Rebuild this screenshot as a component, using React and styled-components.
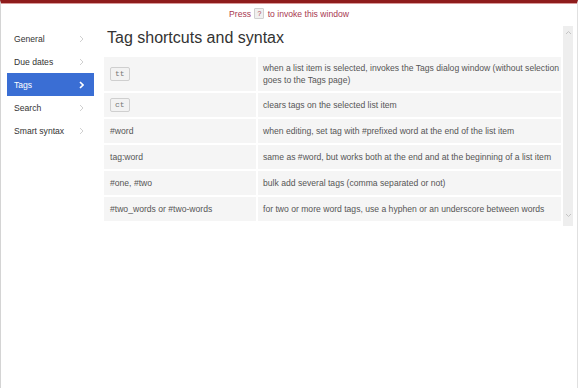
import React from 'react'
import styled, { createGlobalStyle } from 'styled-components'

const GlobalStyle = createGlobalStyle`
    html, body {
        margin: 0;
        padding: 0;
        background: #fff;
    }
    * {
        box-sizing: border-box;
    }
`;

const navItems = ['General', 'Due dates', 'Tags', 'Search', 'Smart syntax'];

const rows = [
    { key: 'tt', desc: 'when a list item is selected, invokes the Tags dialog window (without selection goes to the Tags page)' },
    { key: 'ct', desc: 'clears tags on the selected list item' },
    { syntax: '#word', desc: 'when editing, set tag with #prefixed word at the end of the list item' },
    { syntax: 'tag:word', desc: 'same as #word, but works both at the end and at the beginning of a list item' },
    { syntax: '#one, #two', desc: 'bulk add several tags (comma separated or not)' },
    { syntax: '#two_words or #two-words', desc: 'for two or more word tags, use a hyphen or an underscore between words' },
];

function Chevron({ active }) {
    return (
        <svg width="5" height="8" viewBox="0 0 5 8">
            <polyline
                points="1,1 4,4 1,7"
                fill="none"
                stroke={active ? '#fff' : '#d0d0d0'}
                strokeWidth={active ? 1.6 : 1}
            />
        </svg>
    )
}

function Arrow({ up }) {
    return (
        <svg width="7" height="5" viewBox="0 0 7 5">
            <polyline
                points={up ? '1,4 3.5,1.5 6,4' : '1,1 3.5,3.5 6,1'}
                fill="none"
                stroke="#c4c4c4"
                strokeWidth="1"
            />
        </svg>
    )
}

function App() {
    return (
        <Frame>
            <GlobalStyle />
            <Hint>
                Press <HintKey>?</HintKey> to invoke this window
            </Hint>
            <Body>
                <Sidebar>
                    {navItems.map(item => (
                        <NavItem key={item} $active={item === 'Tags'}>
                            {item}
                            <Chevron active={item === 'Tags'} />
                        </NavItem>
                    ))}
                </Sidebar>
                <Content>
                    <Inner>
                        <Title>Tag shortcuts and syntax</Title>
                        <Table>
                            {rows.map((row, i) => (
                                <React.Fragment key={i}>
                                    <Cell $tall={i === 0}>
                                        {row.key ? <Key>{row.key}</Key> : row.syntax}
                                    </Cell>
                                    <DescCell $tall={i === 0}>{row.desc}</DescCell>
                                </React.Fragment>
                            ))}
                        </Table>
                    </Inner>
                    <Track>
                        <Arrow up />
                        <Arrow />
                    </Track>
                </Content>
            </Body>
        </Frame>
    )
}

const Frame = styled.div`
    width: 578px;
    height: 100vh;
    border-top: 3px solid #8e1c1c;
    border-left: 1px solid #d4d4d4;
    border-right: 1px solid #e0e0e0;
    box-shadow: inset 0 1px 0 #d99a9a;
    font-family: "Liberation Sans", Arial, sans-serif;
    font-size: 8.6px;
    color: #444;
`;

const Hint = styled.div`
    text-align: center;
    padding-top: 4px;
    height: 23px;
    line-height: 14px;
    color: #a8384f;
`;

const HintKey = styled.span`
    display: inline-block;
    font-size: 7px;
    line-height: 9px;
    padding: 0 2px;
    margin: 0 1px;
    background: #f0f0f0;
    border: 1px solid #d0d0d0;
    border-radius: 1px;
    color: #a8384f;
    vertical-align: 1px;
`;

const Body = styled.div`
    display: flex;
    gap: 10px;
    padding-left: 6px;
    padding-right: 4px;
`;

const Sidebar = styled.div`
    width: 87px;
    padding-top: 1px;
    display: flex;
    flex-direction: column;
`;

const NavItem = styled.div`
    height: 23px;
    display: flex;
    align-items: center;
    justify-content: space-between;
    padding: 0 10px 0 7px;
    color: ${p => (p.$active ? '#fff' : '#333')};
    background: ${p => (p.$active ? '#3a6ed4' : 'transparent')};
`;

const Content = styled.div`
    flex: 1;
    height: 200px;
    display: flex;
    gap: 2px;
`;

const Inner = styled.div`
    flex: 1;
    overflow: hidden;
`;

const Title = styled.h1`
    margin: 1px 0 8px 3px;
    font-size: 16px;
    line-height: 22px;
    font-weight: 400;
    color: #333;
`;

const Table = styled.div`
    display: grid;
    grid-template-columns: 152px 1fr;
    column-gap: 2px;
    row-gap: 2px;
    padding-bottom: 2px;
    background: #fff;
`;

const Cell = styled.div`
    height: ${p => (p.$tall ? '34px' : '24px')};
    display: flex;
    align-items: center;
    padding: 0 6px;
    background: #f5f5f5;
    color: #555;
`;

const DescCell = styled(Cell)`
    padding: 0 2px 0 5px;
    line-height: 12px;
`;

const Key = styled.span`
    display: inline-block;
    font-family: "Liberation Mono", "Courier New", monospace;
    font-size: 8px;
    line-height: 12px;
    padding: 0 4px;
    color: #777;
    background: #f2f2f2;
    border: 1px solid #cfcfcf;
    border-radius: 2px;
`;

const Track = styled.div`
    width: 10px;
    background: #eeeeee;
    display: flex;
    flex-direction: column;
    align-items: center;
    justify-content: space-between;
    padding: 4px 0 8px;
`;

export default App
